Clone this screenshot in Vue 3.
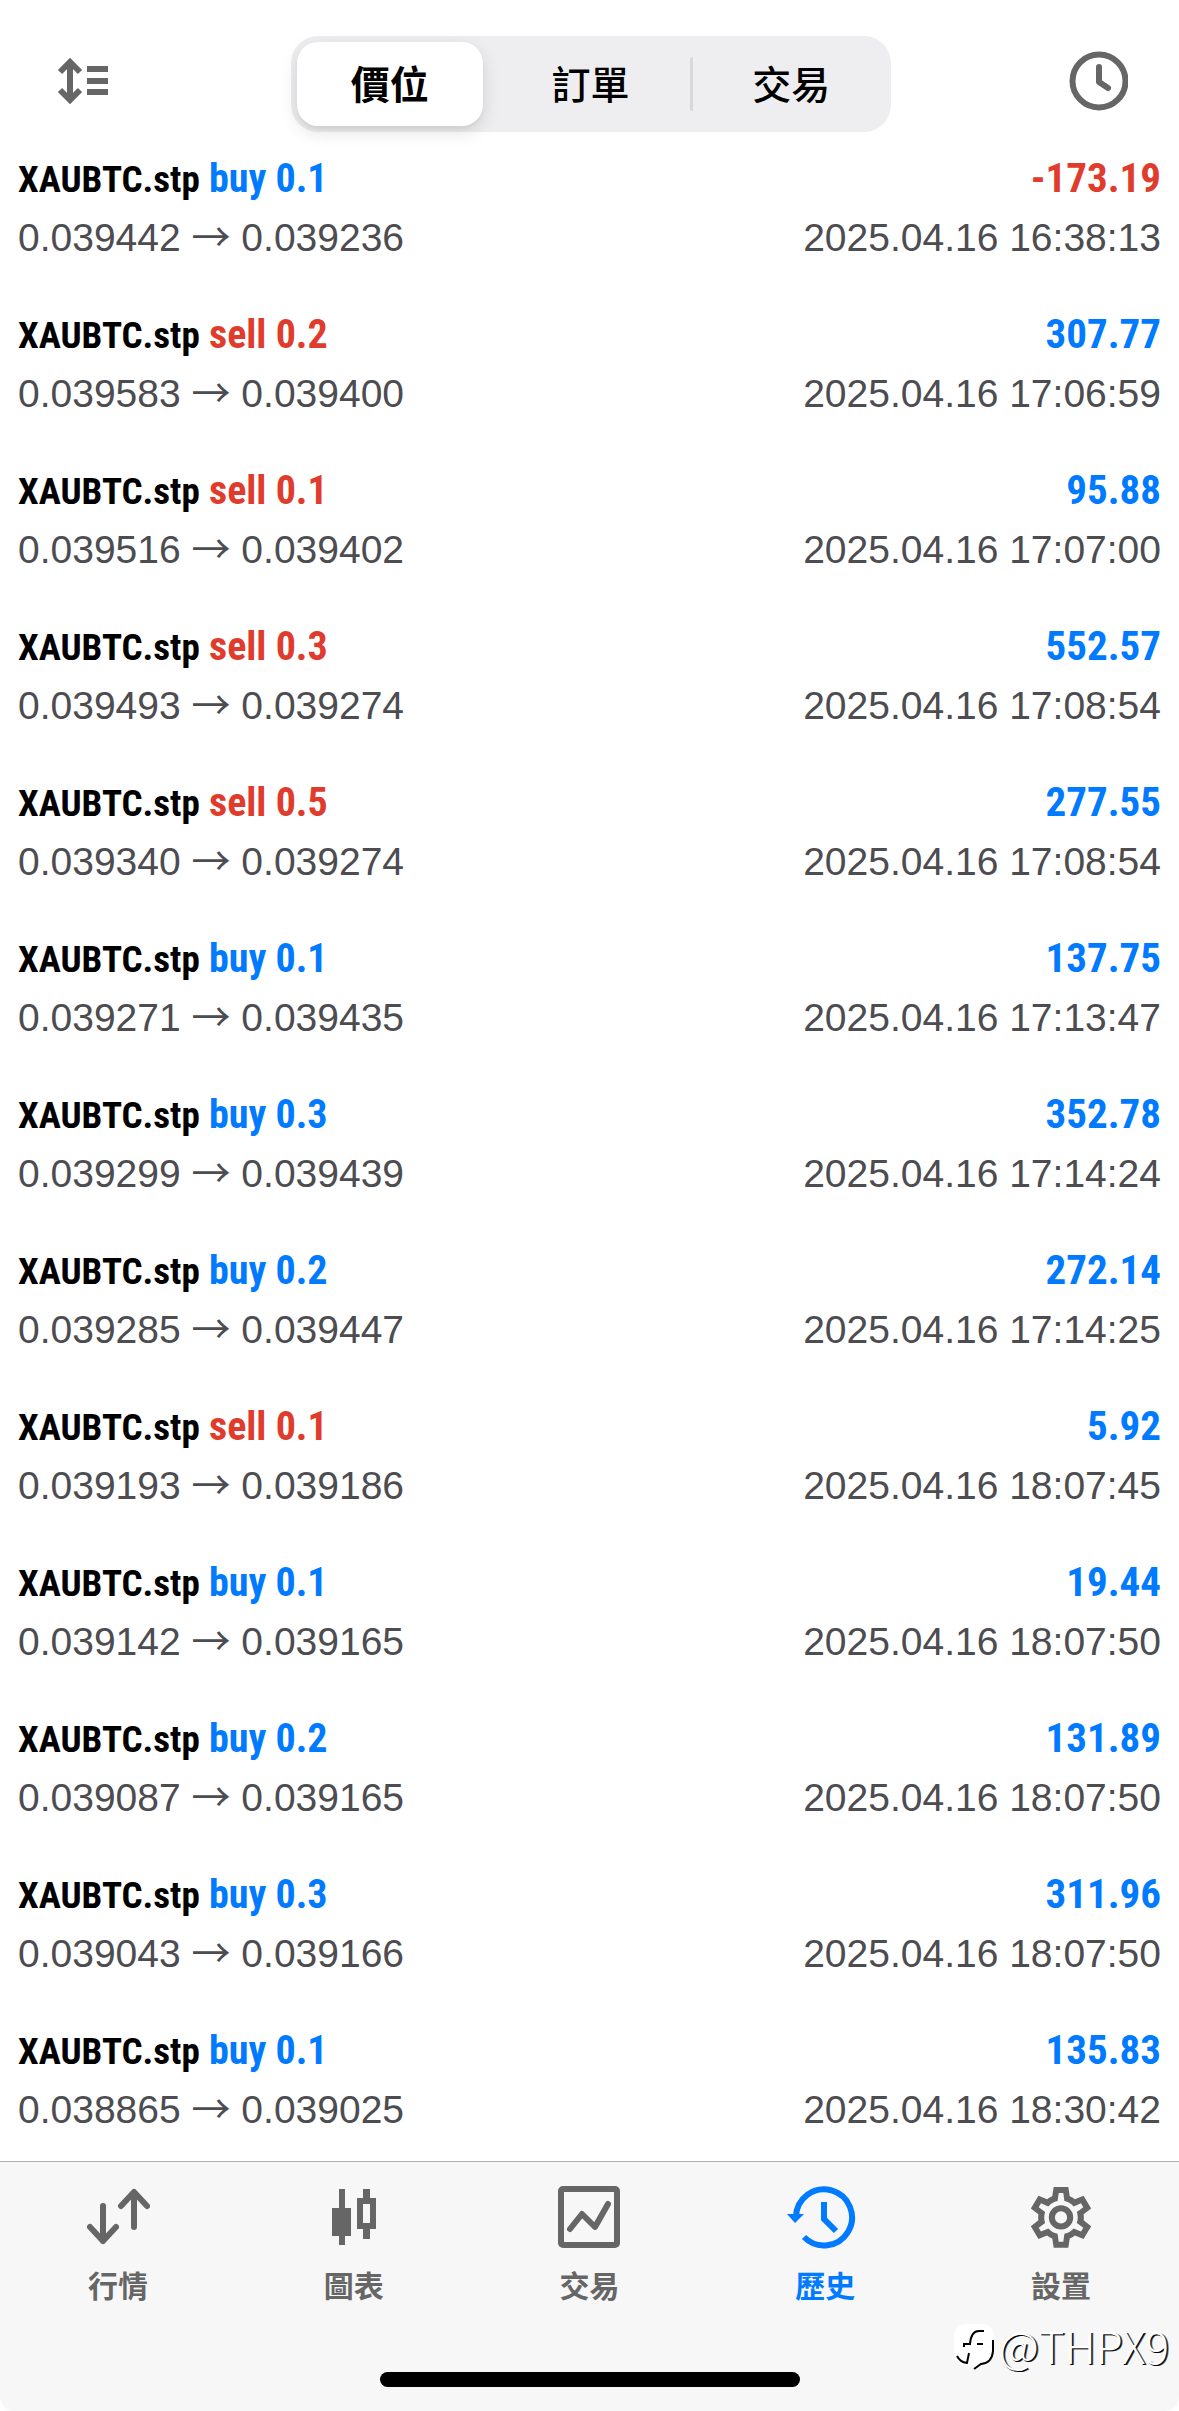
<script setup>
import { ref } from 'vue'

const segments = ['價位', '訂單', '交易']
const segment = ref('價位')
const symbol = 'XAUBTC.stp'

const deals = [
  ['buy', '0.1', '-173.19', '0.039442', '0.039236', '2025.04.16 16:38:13'],
  ['sell', '0.2', '307.77', '0.039583', '0.039400', '2025.04.16 17:06:59'],
  ['sell', '0.1', '95.88', '0.039516', '0.039402', '2025.04.16 17:07:00'],
  ['sell', '0.3', '552.57', '0.039493', '0.039274', '2025.04.16 17:08:54'],
  ['sell', '0.5', '277.55', '0.039340', '0.039274', '2025.04.16 17:08:54'],
  ['buy', '0.1', '137.75', '0.039271', '0.039435', '2025.04.16 17:13:47'],
  ['buy', '0.3', '352.78', '0.039299', '0.039439', '2025.04.16 17:14:24'],
  ['buy', '0.2', '272.14', '0.039285', '0.039447', '2025.04.16 17:14:25'],
  ['sell', '0.1', '5.92', '0.039193', '0.039186', '2025.04.16 18:07:45'],
  ['buy', '0.1', '19.44', '0.039142', '0.039165', '2025.04.16 18:07:50'],
  ['buy', '0.2', '131.89', '0.039087', '0.039165', '2025.04.16 18:07:50'],
  ['buy', '0.3', '311.96', '0.039043', '0.039166', '2025.04.16 18:07:50'],
  ['buy', '0.1', '135.83', '0.038865', '0.039025', '2025.04.16 18:30:42'],
].map(([side, volume, profit, open, close, time]) => ({ side, volume, profit, open, close, time }))
</script>

<template>
  <div class="app">
    <header class="bar">
      <button class="icon-button" type="button" aria-label="排序">
        <svg width="52" height="48" viewBox="0 0 52 48">
          <path d="M13 6V42M3 15L13 5L23 15M3 33L13 43L23 33" fill="none" stroke="#666" stroke-width="6" />
          <path d="M30 9H51V15H30ZM30 21H51V27H30ZM30 32H51V38H30Z" fill="#666" />
        </svg>
      </button>
      <div class="segments" role="group">
        <button
          v-for="name in segments"
          :key="name"
          type="button"
          class="segment"
          :class="{ selected: name === segment }"
          @click="segment = name"
        >{{ name }}</button>
      </div>
      <button class="icon-button" type="button" aria-label="時間">
        <svg width="60" height="60" viewBox="0 0 60 60" fill="none" stroke="#666" stroke-width="6">
          <circle cx="31" cy="30" r="26.5" />
          <path d="M31 16V31L40 37" stroke-linecap="round" stroke-linejoin="round" />
        </svg>
      </button>
    </header>

    <main class="content">
      <ul class="deals">
        <li v-for="(deal, i) in deals" :key="i" class="deal">
          <div class="line title">
            <span><span class="symbol">{{ symbol }}</span> <span :class="deal.side">{{ deal.side }} {{ deal.volume }}</span></span>
            <span class="profit" :class="deal.profit.startsWith('-') ? 'sell' : 'buy'">{{ deal.profit }}</span>
          </div>
          <div class="line detail">
            <span>{{ deal.open }} <span class="arrow">→</span> {{ deal.close }}</span>
            <time>{{ deal.time }}</time>
          </div>
        </li>
      </ul>
    </main>

    <footer class="dock">
      <nav class="tabs">
        <a class="tab" href="#quotes">
          <svg width="64" height="64" viewBox="0 0 64 64" fill="none" stroke="currentColor" stroke-width="6" stroke-linecap="round" stroke-linejoin="round">
            <path d="M17 20V55M4 41L17 55L30 41M48 41V7M35 20L48 6L61 20" />
          </svg>
          <span>行情</span>
        </a>
        <a class="tab" href="#chart">
          <svg width="64" height="64" viewBox="0 0 64 64" fill="currentColor">
            <path d="M17 3H23V22H29V50H23V59H17V50H10V22H17Z" />
            <path fill-rule="evenodd" d="M41 3H48V12H54V43H48V53H41V43H35V12H41ZM41 18V37H48V18Z" />
          </svg>
          <span>圖表</span>
        </a>
        <a class="tab" href="#trade">
          <svg width="64" height="64" viewBox="0 0 64 64" fill="none" stroke="currentColor" stroke-width="6" stroke-linejoin="round">
            <rect x="4" y="3" width="56" height="56" rx="2" />
            <path d="M13 43L25 28L38 41L51 18" stroke-linecap="round" />
          </svg>
          <span>交易</span>
        </a>
        <a class="tab active" href="#history" aria-current="page">
          <svg width="78" height="64" viewBox="0 0 78 64" fill="none" stroke="currentColor" stroke-width="6">
            <path d="M10 31A28 28 0 1 1 18 51" />
            <path d="M38 16V33L50 45" />
            <path d="M1 28H18L9 37Z" fill="currentColor" stroke="none" />
          </svg>
          <span>歷史</span>
        </a>
        <a class="tab" href="#settings">
          <svg width="64" height="64" viewBox="1.5 1.7 21 21" fill="currentColor" fill-rule="evenodd">
            <path d="M12 8A4 4 0 0 1 12 16A4 4 0 0 1 12 8M12 10A2 2 0 0 0 12 14A2 2 0 0 0 12 10M9.6 22L9.13 18.93C8.5 18.68 7.96 18.34 7.44 17.94L4.6 19.1L2.1 14.9L4.57 12.97L4.5 12L4.57 11L2.1 9.1L4.6 4.9L7.44 6.05C7.96 5.66 8.5 5.32 9.13 5.07L9.6 2H14.4L14.87 5.07C15.5 5.32 16.04 5.66 16.56 6.05L19.4 4.9L21.9 9.1L19.43 11L19.5 12L19.43 12.97L21.9 14.9L19.4 19.1L16.56 17.94C16.04 18.34 15.5 18.68 14.87 18.93L14.4 22ZM11.25 4L10.88 6.61C9.68 6.86 8.62 7.5 7.85 8.39L5.44 7.35L4.69 8.65L6.8 10.2C6.4 11.37 6.4 12.64 6.8 13.8L4.68 15.36L5.43 16.66L7.86 15.62C8.63 16.5 9.68 17.14 10.87 17.38L11.24 20H12.76L13.13 17.39C14.32 17.14 15.37 16.5 16.14 15.62L18.57 16.66L19.32 15.36L17.2 13.81C17.6 12.64 17.6 11.37 17.2 10.2L19.31 8.65L18.56 7.35L16.15 8.39C15.38 7.5 14.32 6.86 13.12 6.62L12.75 4Z" />
          </svg>
          <span>設置</span>
        </a>
      </nav>
      <div class="home"></div>
      <div class="watermark">
        <svg width="44" height="50" viewBox="0 0 44 50">
          <path d="M13 1H29Q41 1 41 14V27Q41 38 30 41L22 47L20 42H13Q1 42 1 29V14Q1 1 13 1Z" fill="#fff" />
          <path d="M40 17V28Q39 40 28 41L21 46M4 33Q7 39 14 40L16 30M11 24V21H17Q18 8 26 8H31M24 21H30" fill="none" stroke="#000" stroke-width="2" />
        </svg>
        <span>@THPX9</span>
      </div>
    </footer>
  </div>
</template>

<style>
body {
  margin: 0;
  background: #fff;
}
</style>

<style scoped>
.app {
  min-height: 100vh;
  display: flex;
  flex-direction: column;
  background: #fff;
  color: #000;
  font-family: "Liberation Sans", "Noto Sans CJK TC", sans-serif;
}
.bar {
  height: 132px;
  padding: 36px 49px 0 51px;
  box-sizing: border-box;
  display: flex;
  justify-content: space-between;
  align-items: flex-start;
}
.icon-button {
  width: 64px;
  height: 90px;
  padding: 0;
  border: 0;
  background: none;
  display: flex;
  align-items: center;
  justify-content: center;
}
.segments {
  width: 600px;
  height: 96px;
  padding: 6px;
  box-sizing: border-box;
  display: flex;
  gap: 14px;
  border-radius: 27px;
  background: #eeeef0;
}
.segment {
  flex: 1;
  position: relative;
  padding: 0 0 4px;
  border: 0;
  border-radius: 21px;
  background: none;
  color: #000;
  font: 500 39px/80px "Noto Sans CJK TC", sans-serif;
}
.segment.selected {
  background: #fff;
  font-weight: 700;
  box-shadow: 0 6px 18px rgba(0, 0, 0, 0.12), 0 3px 3px rgba(0, 0, 0, 0.04);
}
.segment:last-child::before {
  content: "";
  position: absolute;
  left: -8px;
  top: 15px;
  width: 3px;
  height: 54px;
  border-radius: 2px;
  background: #d8d8da;
}
.content {
  padding-bottom: 1px;
}
.deals {
  margin: 0;
  padding: 0;
  list-style: none;
}
.deal {
  height: 156px;
  padding: 16px 18px 0;
  box-sizing: border-box;
}
.line {
  height: 60px;
  display: flex;
  justify-content: space-between;
  align-items: baseline;
  line-height: 60px;
  white-space: nowrap;
}
.title {
  font-family: "Liberation Sans Narrow", "Roboto Condensed", "Liberation Sans", sans-serif;
  font-size: 40px;
  font-weight: 700;
}
.symbol {
  font-size: 37px;
}
.profit {
  font-size: 41px;
}
.detail {
  color: #4c4c51;
  font-size: 39px;
}
.arrow {
  font-family: "Noto Sans CJK TC", sans-serif;
  line-height: 39px;
}
.buy {
  color: #007aff;
}
.sell {
  color: #e03c2d;
}
.dock {
  flex: 1;
  position: relative;
  display: flex;
  flex-direction: column;
  justify-content: space-between;
  border-top: 1px solid #b0b0b0;
  border-radius: 0 0 14px 14px;
  background: #f7f7f7;
}
.tabs {
  padding-top: 24px;
  display: flex;
}
.tab {
  flex: 1;
  display: flex;
  flex-direction: column;
  align-items: center;
  gap: 12px;
  color: #666;
  text-decoration: none;
  font: 700 30px/44px "Noto Sans CJK TC", sans-serif;
}
.tab.active {
  color: #007aff;
}
.home {
  width: 420px;
  height: 15px;
  margin: 0 auto 24px;
  border-radius: 8px;
  background: #000;
}
.watermark {
  position: absolute;
  right: 10px;
  bottom: 38px;
  display: flex;
  align-items: flex-start;
  gap: 2px;
  color: #fff;
  font: 300 44px/44px "Noto Sans CJK SC", sans-serif;
  text-shadow: 1px 1px 0 #000, 2px 1px 0 #555;
}
</style>
